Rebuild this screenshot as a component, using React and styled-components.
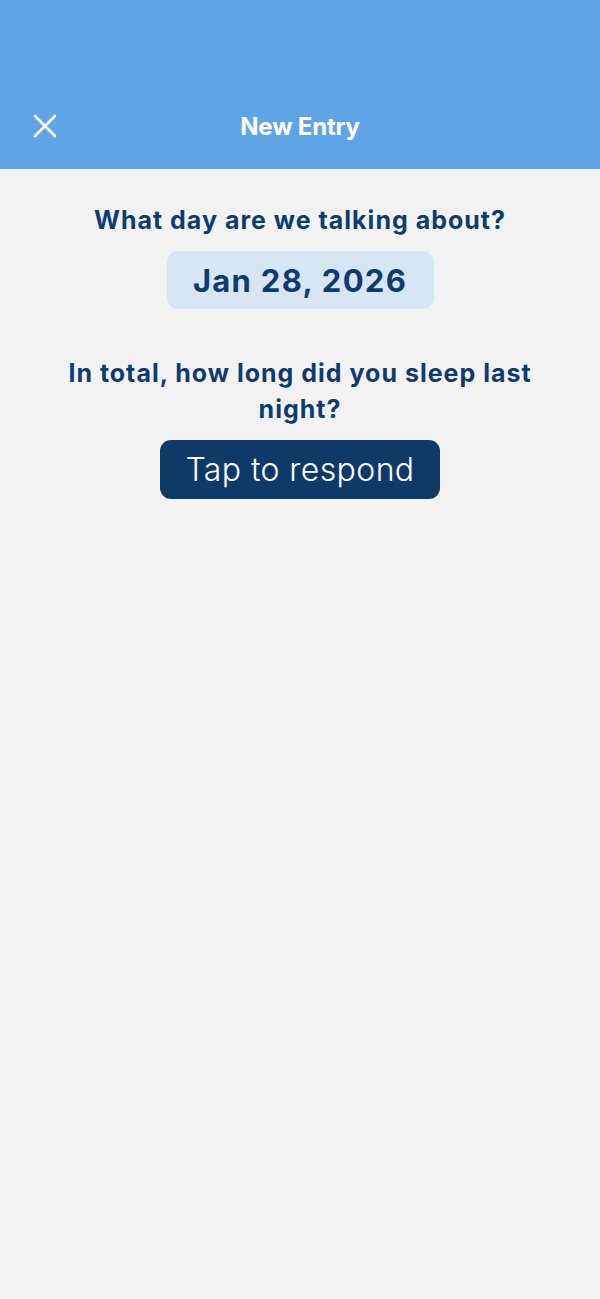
import React from "react";
import styled, { createGlobalStyle } from "styled-components";

const GlobalStyle = createGlobalStyle`
  html, body {
    margin: 0;
    padding: 0;
    background: #f2f2f2;
    font-family: Inter, "Noto Sans", sans-serif;
  }
`;

const Page = styled.div`
  min-height: 1299px;
  background: #f2f2f2;
`;

const Header = styled.header`
  height: 169px;
  background: #5fa5e5;
  display: flex;
  align-items: flex-end;
  box-sizing: border-box;
  padding: 0 0 23px;
`;

const HeaderRow = styled.div`
  width: 100%;
  display: grid;
  grid-template-columns: 90px 1fr 90px;
  align-items: center;
  height: 40px;
`;

const CloseButton = styled.button`
  background: none;
  border: none;
  padding: 0 0 0 33px;
  display: flex;
  align-items: center;
  cursor: pointer;
`;

const Title = styled.h1`
  margin: 0;
  text-align: center;
  color: #ffffff;
  font-size: 24px;
  font-weight: 700;
  letter-spacing: -0.2px;
`;

const Content = styled.main`
  display: flex;
  flex-direction: column;
  align-items: center;
  padding: 33px 50px 0;
`;

const Question = styled.h2`
  margin: 0;
  text-align: center;
  color: #0f3c6d;
  font-size: 25px;
  font-weight: 700;
  line-height: 36px;
  letter-spacing: 1px;
  margin-top: ${(p) => p.$top || 0}px;
`;

const DatePill = styled.button`
  margin-top: 13px;
  width: 267px;
  height: 58px;
  border: none;
  border-radius: 11px;
  background: #d7e6f5;
  color: #0f3c6d;
  font-family: inherit;
  font-size: 31px;
  font-weight: 700;
  letter-spacing: 1.3px;
  cursor: pointer;
`;

const RespondButton = styled.button`
  margin-top: 13px;
  width: 280px;
  height: 59px;
  border: none;
  border-radius: 11px;
  background: #0f3a68;
  color: #ffffff;
  font-family: inherit;
  font-size: 32px;
  font-weight: 300;
  letter-spacing: 0.4px;
  cursor: pointer;
`;

const CloseIcon = () => (
  <svg width="24" height="24" viewBox="0 0 24 24" fill="none">
    <path
      d="M2 2 L22 22 M22 2 L2 22"
      stroke="#ffffff"
      strokeWidth="2.6"
      strokeLinecap="round"
    />
  </svg>
);

export default function App() {
  return (
    <Page>
      <GlobalStyle />
      <Header>
        <HeaderRow>
          <CloseButton aria-label="close">
            <CloseIcon />
          </CloseButton>
          <Title>New Entry</Title>
          <span />
        </HeaderRow>
      </Header>
      <Content>
        <Question>What day are we talking about?</Question>
        <DatePill>Jan 28, 2026</DatePill>
        <Question $top={46}>In total, how long did you sleep last night?</Question>
        <RespondButton>Tap to respond</RespondButton>
      </Content>
    </Page>
  );
}
